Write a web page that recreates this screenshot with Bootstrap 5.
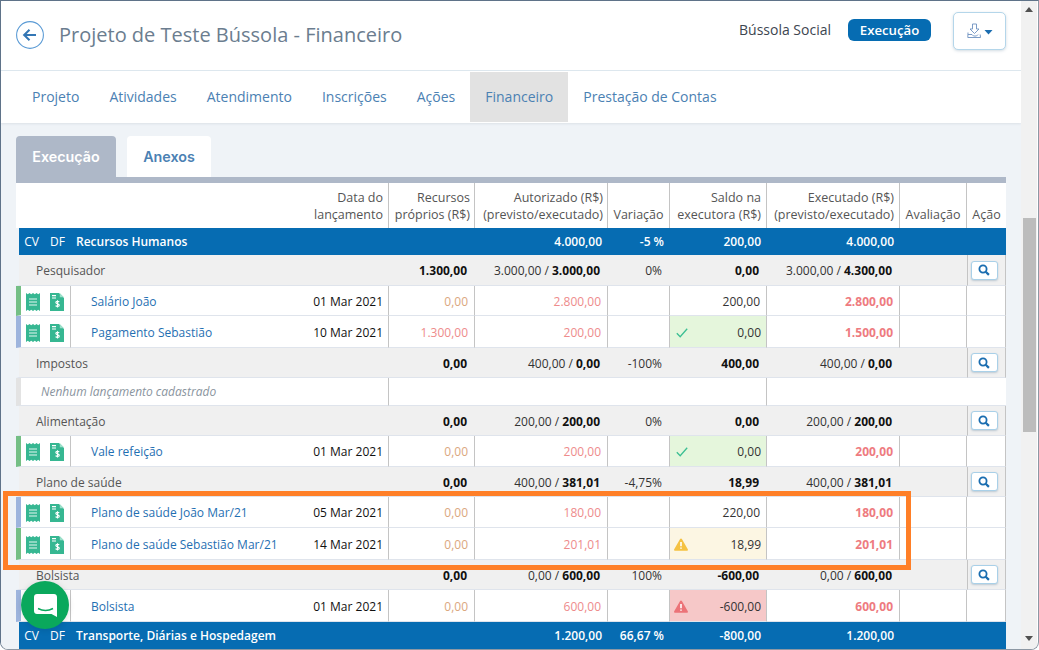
<!DOCTYPE html>
<html lang="pt-BR">
<head>
<meta charset="utf-8">
<title>Projeto de Teste Bússola - Financeiro</title>
<link href="https://cdn.jsdelivr.net/npm/bootstrap@5.3.0/dist/css/bootstrap.min.css" rel="stylesheet">
<style>
html,body{margin:0;height:100%;overflow:hidden;background:#fff}
body{font-family:"Open Sans","Liberation Sans",sans-serif;font-size:12px;color:#333}
.win{position:relative;width:1039px;height:650px;overflow:hidden;border:1px solid #8d98a4;border-top-color:#5f7389;border-left-color:#5f7389;border-radius:0 0 8px 8px}
.mainpane{width:1020px;height:100%;background:#eff3f7;flex:none}
.hdr{height:70px;background:#fff;border-bottom:1px solid #dfe9ef;padding:0 15px}
.back{width:28px;height:28px;margin-top:20px;flex:none}
.ttl{font-size:20px;font-weight:400;color:#6b7d8f;margin:20px 0 0 15px;line-height:28px}
.org{font-size:14px;color:#3d4650;margin-top:18px;line-height:22px}
.stbadge{background:#066cb2;color:#fff;font-size:13.2px;font-weight:600;border-radius:6px;height:22px;line-height:22px;width:83px;text-align:center;margin:18px 22px 0 17px}
.dlbtn{width:53px;height:38px;margin-top:11px;padding:0;background:#fff;border:1px solid #b4d6ea;border-radius:5px;box-shadow:0 1px 3px rgba(70,110,140,.25)}
.pnav{height:52px;background:#fff;padding:1px 16px;box-shadow:0 1px 2px rgba(90,110,130,.12)}
.pnav .nav-link{height:50px;line-height:50px;padding:0 15px;font-size:14px;color:#4b81b3}
.pnav .nav-link.active{background:#e2e2e2;color:#4b81b3}
.ftabs{padding:13px 15px 0}
.ftabs .nav-link{height:41px;line-height:42px;padding:0;width:84px;text-align:center;background:#fff;color:#4b81b3;font-family:Inter,"Open Sans",sans-serif;font-size:14.3px;font-weight:600;border-radius:4px 4px 0 0;margin-right:11px}
.ftabs .nav-link.active{background:#aeb8c8;color:#fff;width:100px}
.tblwrap{margin:0 15px;border-top:6px solid #aeb8c8;background:#fff}
.fin{table-layout:fixed;width:990px;border-collapse:separate;border-spacing:0;--bs-table-bg:transparent;margin:0;font-size:12px}
.fin>*>tr>*{padding:0 6px;box-shadow:none;vertical-align:middle;text-align:right;border-bottom:1px solid #dfe4ec;border-right:1px solid #c4c4c4;color:#333;white-space:nowrap;overflow:hidden}
.fin>tbody>tr:not(.sec):not(.r28)>*{padding-top:2px}
.fin>thead>tr>th{height:45px;font-size:12.5px;font-weight:400;color:#555;line-height:17px;padding:4px 5px 5px 0;vertical-align:bottom;border-bottom:0}
.fin>thead>tr>th.nob{border-right:0}
.fin>thead>tr>th.ctr{text-align:center;padding-left:0;padding-right:0}
.fin>thead>tr>th.hrp{padding-right:4px}
.fin>tbody>tr.sec>*{height:27px;background:#066cb2;color:#fff;font-weight:600;border-right:0;border-bottom:0}
.fin>tbody>tr.sec>.cvh{font-weight:400;text-align:center;padding:0}
.fin>tbody>tr.sec>.cv1{border-left:3px solid #eff3f7}
.fin>tbody>tr.sec>.nm{text-align:left;padding-left:5px}
.fin>tbody>tr.grp>*{background:#f0f0f0;border-right:0;color:#333;padding-right:8px}
.fin>tbody>tr.grp>.nm{text-align:left;padding-left:17px;border-left:3px solid #eff3f7;color:#555}
.fin>tbody>tr.grp>.act{border-left:1px solid #c4c4c4;border-right:1px solid #c4c4c4;text-align:center;padding:0 5px 0 0}
.fin b{font-weight:700;color:#111}
.fin>tbody>tr>.strong{font-weight:700;color:#111}
.r30>*{height:30px}.r31>*{height:31px}.r32>*{height:32px}.r28>*{height:28px}
.fin>tbody>tr>.ic{padding:0;text-align:center;border-right:0}
.fin>tbody>tr>.ic svg{display:block;margin:0 auto}
.fin>tbody>tr>.ic2{border-right:1px solid #c4c4c4}
.stg{border-left:5px solid #74bf85!important}
.stb{border-left:5px solid #9db4dd!important}
.stn{border-left:5px solid #e3e3e3!important}
.fin>tbody>tr>.lnk{text-align:left;padding-left:20px;border-right:0;color:#1f6fb2}
.fin>tbody>tr>.dt{font-weight:500;color:#111;padding-right:5px}
.fin>tbody>tr>.tan{color:#dba77e}
.fin>tbody>tr>.rd{color:#ee8b8b}
.fin>tbody>tr>.rdb{color:#ee7b80;font-weight:700}
.fin>tbody>tr>.nbr{border-right:0}
.fin>tbody>tr>.empty{text-align:left;font-style:italic;color:#8a949e;padding-left:20px}
.fin>tbody>tr>.okc{background:#e5f6dc;padding-right:5px}
.fin>tbody>tr>.wrn{background:#fcf6e3;padding-right:5px;padding-left:4px}
.fin>tbody>tr>.dng{background:#f6c8c8;padding-right:5px;padding-left:4px}
.srch{width:27px;height:19px;padding:0;background:#fff;border:1px solid #a9d0e8;border-radius:3px;box-shadow:0 1px 2px rgba(70,110,140,.3);display:inline-flex;align-items:center;justify-content:center;vertical-align:middle}
.vscroll{width:16px;height:100%;background:#f1f1f1;flex:none}
.thumb{height:214px;background:#bcbcbc;margin:0 1px 0 2px}
.arw{width:0;height:0;border-left:4px solid transparent;border-right:4px solid transparent;margin:0 auto}
.arw.up{border-bottom:5px solid #505050;margin-top:6px;margin-bottom:206px}
.arw.dn{border-top:5px solid #505050;margin-top:204px}
.hilite{position:absolute;left:2px;top:490px;width:908px;height:79px;border:5px solid #ff7f27;pointer-events:none}
.chat{position:absolute;left:20px;top:580px;width:48px;height:48px;border-radius:50%;background:#0aa85c;display:flex;align-items:center;justify-content:center;box-shadow:0 1px 6px rgba(0,0,0,.12)}
</style>
</head>
<body>
<svg width="0" height="0" class="d-none">
<symbol id="ir" viewBox="0 0 14 18"><path d="M0 0l1.750 1.200L3.500 0l1.750 1.200L7 0l1.750 1.200L10.500 0l1.750 1.200L14 0v18l-1.750-1.200L10.500 18l-1.750-1.200L7 18l-1.750-1.200L3.500 18l-1.750-1.200L0 18z" fill="#36b792"/><path d="M3 6h8M3 9h8M3 12h8" stroke="#e4f6f0" stroke-width="1.200"/></symbol>
<symbol id="id" viewBox="0 0 14 18"><path d="M0 0h9l5 5v13H0z" fill="#36b792"/><path d="M9.800 0L14 4.200H9.800z" fill="#9adfc9"/><path d="M2 2.600h4M2 5h4" stroke="#fff" stroke-width="1.100"/><path d="M9.200 8.900c-.5-.7-3.400-1-3.400.6 0 1.700 3.500 1 3.500 2.700 0 1.500-3 1.400-3.700.5M7.500 7.200v7.200" fill="none" stroke="#fff" stroke-width="1.100"/></symbol>
<symbol id="il" viewBox="0 0 12 12"><circle cx="5" cy="5" r="3.600" fill="none" stroke="#1a6db0" stroke-width="1.800"/><path d="M7.700 7.700l3.200 3.200" stroke="#1a6db0" stroke-width="2.200"/></symbol>
<symbol id="ic" viewBox="0 0 12 10"><path d="M.8 5.200l3.400 3.600L11.200.8" fill="none" stroke="#3bbf93" stroke-width="1.300"/></symbol>
<symbol id="iy" viewBox="0 0 14 13"><path d="M7 .4c.4 0 .7.2.9.6l5.900 10.300c.4.700-.1 1.500-.9 1.500H1.100c-.8 0-1.300-.8-.9-1.500L6.100 1c.2-.4.500-.6.900-.6z" fill="#f5c242"/><path d="M7 4v4.200M7 9.400v1.400" stroke="#fff" stroke-width="1.600"/></symbol>
<symbol id="ix" viewBox="0 0 14 13"><path d="M7 .4c.4 0 .7.2.9.6l5.900 10.300c.4.700-.1 1.500-.9 1.500H1.100c-.8 0-1.300-.8-.9-1.500L6.100 1c.2-.4.500-.6.900-.6z" fill="#ec7378"/><path d="M7 4v4.200M7 9.400v1.400" stroke="#fff" stroke-width="1.600"/></symbol>
</svg>

<div class="win d-flex">
  <div class="mainpane">
    <header class="hdr d-flex align-items-start">
      <a href="#" class="back" aria-label="Voltar">
        <svg width="28" height="28" viewBox="0 0 28 28"><circle cx="14" cy="14" r="13.400" fill="none" stroke="#5b9bd5" stroke-width="1.100"/><path d="M8 14h12M13.500 8.800L8.200 14l5.300 5.200" fill="none" stroke="#3477b5" stroke-width="2.100"/></svg>
      </a>
      <h1 class="ttl">Projeto de Teste Bússola - Financeiro</h1>
      <div class="ms-auto d-flex align-items-start">
        <span class="org">Bússola Social</span>
        <span class="stbadge">Execução</span>
        <button type="button" class="btn dlbtn d-flex align-items-center justify-content-center" aria-label="Baixar">
          <svg width="26" height="16" viewBox="0 0 26 16"><path d="M5.500 1h4v5h2.500L7.500 10.500 3 6h2.500zM1 9.500L.8 14.500h12.700l-.3-3M1 11.500h4l1.500 1.500h3L11 11.500" fill="none" stroke="#6d91c0" stroke-width=".9"/><path d="M17.500 7h8l-4 4.500z" fill="#1a6db0"/></svg>
        </button>
      </div>
    </header>
    <ul class="nav pnav">
      <li class="nav-item"><a class="nav-link" href="#">Projeto</a></li>
      <li class="nav-item"><a class="nav-link" href="#">Atividades</a></li>
      <li class="nav-item"><a class="nav-link" href="#">Atendimento</a></li>
      <li class="nav-item"><a class="nav-link" href="#">Inscrições</a></li>
      <li class="nav-item"><a class="nav-link" href="#">Ações</a></li>
      <li class="nav-item"><a class="nav-link active" href="#">Financeiro</a></li>
      <li class="nav-item"><a class="nav-link" href="#">Prestação de Contas</a></li>
    </ul>
    <ul class="nav ftabs">
      <li class="nav-item"><a class="nav-link active" href="#">Execução</a></li>
      <li class="nav-item"><a class="nav-link" href="#">Anexos</a></li>
    </ul>
    <div class="tblwrap">
      <table class="table fin">
        <colgroup><col style="width:28px"><col style="width:27px"><col style="width:228px"><col style="width:90px"><col style="width:86px"><col style="width:133px"><col style="width:62px"><col style="width:97px"><col style="width:133px"><col style="width:67px"><col style="width:39px"></colgroup>
        <thead>
          <tr>
            <th class="nob"></th><th class="nob"></th><th class="nob"></th>
            <th>Data do<br>lançamento</th>
            <th class="hrp">Recursos<br>próprios (R$)</th>
            <th class="hrp">Autorizado (R$)<br>(previsto/executado)</th>
            <th class="ctr">Variação</th>
            <th>Saldo na<br>executora (R$)</th>
            <th>Executado (R$)<br>(previsto/executado)</th>
            <th class="ctr">Avaliação</th>
            <th class="ctr nob">Ação</th>
          </tr>
        </thead>
        <tbody>
          <tr class="sec"><td class="cvh cv1">CV</td><td class="cvh">DF</td><td class="nm" colspan="2">Recursos Humanos</td><td></td><td>4.000,00</td><td>-5 %</td><td>200,00</td><td>4.000,00</td><td></td><td></td></tr>

          <tr class="grp r31"><td class="nm" colspan="3">Pesquisador</td><td></td><td class="strong">1.300,00</td><td>3.000,00 / <b>3.000,00</b></td><td>0%</td><td class="strong">0,00</td><td>3.000,00 / <b>4.300,00</b></td><td></td><td class="act"><button type="button" class="btn srch" aria-label="Ver"><svg width="12" height="12"><use href="#il"/></svg></button></td></tr>
          <tr class="r30"><td class="ic stg"><svg width="14" height="18"><use href="#ir"/></svg></td><td class="ic ic2"><svg width="14" height="18"><use href="#id"/></svg></td><td class="lnk">Salário João</td><td class="dt">01 Mar 2021</td><td class="tan">0,00</td><td class="rd">2.800,00</td><td></td><td>200,00</td><td class="rdb">2.800,00</td><td></td><td></td></tr>
          <tr class="r32"><td class="ic stb"><svg width="14" height="18"><use href="#ir"/></svg></td><td class="ic ic2"><svg width="14" height="18"><use href="#id"/></svg></td><td class="lnk">Pagamento Sebastião</td><td class="dt">10 Mar 2021</td><td class="rd">1.300,00</td><td class="rd">200,00</td><td></td><td class="okc"><div class="d-flex justify-content-between align-items-center"><svg width="12" height="10"><use href="#ic"/></svg><span>0,00</span></div></td><td class="rdb">1.500,00</td><td></td><td></td></tr>

          <tr class="grp r30"><td class="nm" colspan="3">Impostos</td><td></td><td class="strong">0,00</td><td>400,00 / <b>0,00</b></td><td>-100%</td><td class="strong">400,00</td><td>400,00 / <b>0,00</b></td><td></td><td class="act"><button type="button" class="btn srch" aria-label="Ver"><svg width="12" height="12"><use href="#il"/></svg></button></td></tr>
          <tr class="r28"><td class="empty stn" colspan="4">Nenhum lançamento cadastrado</td><td colspan="4"></td><td class="nbr" colspan="3"></td></tr>

          <tr class="grp r30"><td class="nm" colspan="3">Alimentação</td><td></td><td class="strong">0,00</td><td>200,00 / <b>200,00</b></td><td>0%</td><td class="strong">0,00</td><td>200,00 / <b>200,00</b></td><td></td><td class="act"><button type="button" class="btn srch" aria-label="Ver"><svg width="12" height="12"><use href="#il"/></svg></button></td></tr>
          <tr class="r31"><td class="ic stg"><svg width="14" height="18"><use href="#ir"/></svg></td><td class="ic ic2"><svg width="14" height="18"><use href="#id"/></svg></td><td class="lnk">Vale refeição</td><td class="dt">01 Mar 2021</td><td class="tan">0,00</td><td class="rd">200,00</td><td></td><td class="okc"><div class="d-flex justify-content-between align-items-center"><svg width="12" height="10"><use href="#ic"/></svg><span>0,00</span></div></td><td class="rdb">200,00</td><td></td><td></td></tr>

          <tr class="grp r30"><td class="nm" colspan="3">Plano de saúde</td><td></td><td class="strong">0,00</td><td>400,00 / <b>381,01</b></td><td>-4,75%</td><td class="strong">18,99</td><td>400,00 / <b>381,01</b></td><td></td><td class="act"><button type="button" class="btn srch" aria-label="Ver"><svg width="12" height="12"><use href="#il"/></svg></button></td></tr>
          <tr class="r31"><td class="ic stb"><svg width="14" height="18"><use href="#ir"/></svg></td><td class="ic ic2"><svg width="14" height="18"><use href="#id"/></svg></td><td class="lnk">Plano de saúde João Mar/21</td><td class="dt">05 Mar 2021</td><td class="tan">0,00</td><td class="rd">180,00</td><td></td><td>220,00</td><td class="rdb">180,00</td><td></td><td></td></tr>
          <tr class="r32"><td class="ic stg"><svg width="14" height="18"><use href="#ir"/></svg></td><td class="ic ic2"><svg width="14" height="18"><use href="#id"/></svg></td><td class="lnk">Plano de saúde Sebastião Mar/21</td><td class="dt">14 Mar 2021</td><td class="tan">0,00</td><td class="rd">201,01</td><td></td><td class="wrn"><div class="d-flex justify-content-between align-items-center"><svg width="14" height="13"><use href="#iy"/></svg><span>18,99</span></div></td><td class="rdb">201,01</td><td></td><td></td></tr>

          <tr class="grp r30"><td class="nm" colspan="3">Bolsista</td><td></td><td class="strong">0,00</td><td>0,00 / <b>600,00</b></td><td>100%</td><td class="strong">-600,00</td><td>0,00 / <b>600,00</b></td><td></td><td class="act"><button type="button" class="btn srch" aria-label="Ver"><svg width="12" height="12"><use href="#il"/></svg></button></td></tr>
          <tr class="r32"><td class="ic stb"><svg width="14" height="18"><use href="#ir"/></svg></td><td class="ic ic2"><svg width="14" height="18"><use href="#id"/></svg></td><td class="lnk">Bolsista</td><td class="dt">01 Mar 2021</td><td class="tan">0,00</td><td class="rd">600,00</td><td></td><td class="dng"><div class="d-flex justify-content-between align-items-center"><svg width="14" height="13"><use href="#ix"/></svg><span>-600,00</span></div></td><td class="rdb">600,00</td><td></td><td></td></tr>

          <tr class="sec"><td class="cvh cv1">CV</td><td class="cvh">DF</td><td class="nm" colspan="2">Transporte, Diárias e Hospedagem</td><td></td><td>1.200,00</td><td>66,67 %</td><td>-800,00</td><td>1.200,00</td><td></td><td></td></tr>
        </tbody>
      </table>
    </div>
  </div>
  <div class="vscroll">
    <div class="arw up"></div>
    <div class="thumb"></div>
    <div class="arw dn"></div>
  </div>
  <div class="hilite"></div>
  <a href="#" class="chat" aria-label="Chat">
    <svg width="23" height="23" viewBox="0 0 23 23"><path d="M3 0h17c1.700 0 3 1.300 3 3v20l-5.500-3H3c-1.700 0-3-1.300-3-3V3c0-1.700 1.300-3 3-3z" fill="#fff"/><path d="M4 14.500c4.500 2.400 10.500 2.400 15 0" fill="none" stroke="#0aa85c" stroke-width="1.500"/></svg>
  </a>
</div>
</body>
</html>
